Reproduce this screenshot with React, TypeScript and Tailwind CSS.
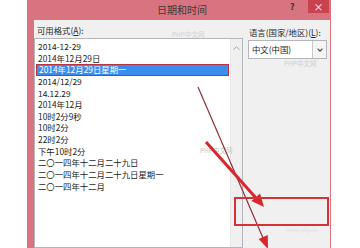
import React from 'react';

const formats = [
  '2014-12-29',
  '2014年12月29日',
  '2014年12月29日星期一',
  '2014/12/29',
  '14.12.29',
  '2014年12月',
  '10时2分9秒',
  '10时2分',
  '22时2分',
  '下午10时2分',
  '二〇一四年十二月二十九日',
  '二〇一四年十二月二十九日星期一',
  '二〇一四年十二月',
];

export default function App() {
  const selected = 2;

  return (
    <div className="relative h-[248px] w-[360px] overflow-hidden bg-white font-['Noto_Sans_CJK_SC',sans-serif] text-[8.4px] text-[#1a1a1a]">
      {/* Dialog window */}
      <div className="ml-[27px] flex h-full w-[304px] flex-col bg-[#d8747f] pl-[7px] pr-px">
        {/* Title bar */}
        <div className="flex h-[20px] items-start">
          <span className="ml-[123px] mt-[4px] text-[10px] leading-[12px] text-[#3b3b3b]">日期和时间</span>
          <span className="ml-[83px] mt-[1px] text-[9px] font-bold leading-[11px] text-[#4a2a2e]">?</span>
          <div className="ml-auto mr-px flex h-[13px] w-[21px] items-center justify-center bg-[#c8434d] text-[10px] leading-none text-white">
            ×
          </div>
        </div>

        {/* Body */}
        <div className="flex flex-1 bg-[#f0f0f0]">
          {/* Format list column */}
          <div className="flex w-[209px] flex-col">
            <div className="h-[18px] pl-[3px] pt-[5px] leading-[11px] text-[#2a2a2a]">
              可用格式(<span className="underline">A</span>):
            </div>
            <div className="flex flex-1 border border-[#b4b6bc] bg-white">
              <div className="flex-1 pt-[2px]">
                {formats.map((f, i) => (
                  <div
                    key={f}
                    className={
                      i === selected
                        ? 'mx-px h-[11.65px] border border-[#b8323f] bg-[#3b8ded] pl-[2px] leading-[9.65px] text-white'
                        : 'h-[11.65px] pl-[3px] leading-[11.65px]'
                    }
                  >
                    {f}
                  </div>
                ))}
              </div>
              {/* Scrollbar */}
              <div className="flex w-[12px] flex-col items-center border-l border-[#e6e6e6] bg-[#f0f0f0] pt-[7px]">
                <svg width="7" height="4" viewBox="0 0 7 4">
                  <path d="M0.5 3.5 L3.5 0.8 L6.5 3.5" fill="none" stroke="#a8a8a8" strokeWidth="1" />
                </svg>
              </div>
            </div>
          </div>

          {/* Language column */}
          <div className="ml-[5px] flex w-[79px] flex-col">
            <div className="h-[20px] pl-px pt-[7px] leading-[11px] text-[#2a2a2a]">
              语言(国家/地区)(<span className="underline">L</span>):
            </div>
            <div className="flex h-[19px] border border-[#b4b6bc] bg-white">
              <span className="flex-1 pl-[3px] leading-[17px]">中文(中国)</span>
              <div className="flex w-[14px] items-center justify-center border-l border-[#c9c9c9] bg-[#f4f4f4]">
                <svg width="6" height="4" viewBox="0 0 6 4">
                  <path d="M0.6 0.6 L3 3.2 L5.4 0.6" fill="none" stroke="#444" strokeWidth="1.1" />
                </svg>
              </div>
            </div>
          </div>
        </div>
      </div>

      {/* Watermarks */}
      <span className="absolute left-[172px] top-[31px] text-[6.5px] leading-none text-[#d2d2d2]">PHP中文网</span>
      <span className="absolute left-[284px] top-[60px] text-[6.5px] leading-none text-[#cfcfcf]">PHP中文网</span>
      <span className="absolute left-[200px] top-[147px] text-[6.5px] leading-none text-[#c4c4c4]">PHP中文网</span>
      <span className="absolute left-[286px] top-[228px] text-[5.5px] leading-none text-[#e2e2e2]">www.php.cn</span>

      {/* Annotations */}
      <svg className="absolute left-0 top-0" width="360" height="248" viewBox="0 0 360 248">
        <line x1="198" y1="87" x2="263" y2="238" stroke="#8e3238" strokeWidth="1.2" />
        <polygon points="268,249 258.6,239 267.8,235" fill="#d42a2f" />
        <line x1="206" y1="142" x2="256" y2="198" stroke="#d8262c" strokeWidth="3" />
        <polygon points="264,207 251.5,201 260,193.5" fill="#d8262c" />
        <rect x="235" y="198" width="93" height="27" fill="none" stroke="#d43338" strokeWidth="2" />
      </svg>
    </div>
  );
}
